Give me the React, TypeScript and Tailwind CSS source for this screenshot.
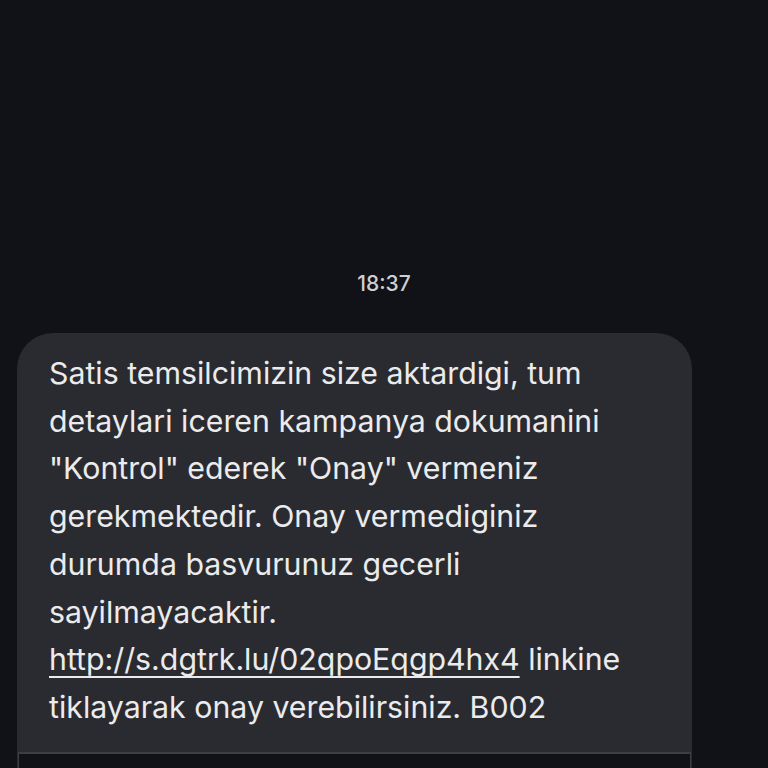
import React from "react";

const lines = [
  "Satis temsilcimizin size aktardigi, tum",
  "detaylari iceren kampanya dokumanini",
  '"Kontrol" ederek "Onay" vermeniz',
  "gerekmektedir. Onay vermediginiz",
  "durumda basvurunuz gecerli",
  "sayilmayacaktir.",
];

const App: React.FC = () => {
  return (
    <div
      className="flex h-[768px] w-[768px] flex-col overflow-hidden bg-[#111217]"
      style={{ fontFamily: "Inter, Roboto, 'Noto Sans', sans-serif" }}
    >
      <div className="pt-[271px] text-center text-[21px] font-medium leading-[26px] text-[#cfcfd3]">18:37</div>

      <div className="ml-[17px] mt-[36px] w-[675px] rounded-t-[36px] bg-[#2a2b30]">
        <div className="px-[32px] pb-[20px] pt-[17px] text-[30.3px] leading-[47.7px] text-[#ebebed]">
          {lines.map((l) => (
            <div key={l} className="whitespace-nowrap">
              {l}
            </div>
          ))}
          <div className="whitespace-nowrap">
            <span className="underline decoration-2 underline-offset-[6px]">http://s.dgtrk.lu/02qpoEqgp4hx4</span> linkine
          </div>
          <div className="whitespace-nowrap">tiklayarak onay verebilirsiniz. B002</div>
        </div>
        <div className="mx-[1px] h-[40px] border-x border-t-2 border-[#3d3e43] bg-[#111217]" />
      </div>
    </div>
  );
};

export default App;
